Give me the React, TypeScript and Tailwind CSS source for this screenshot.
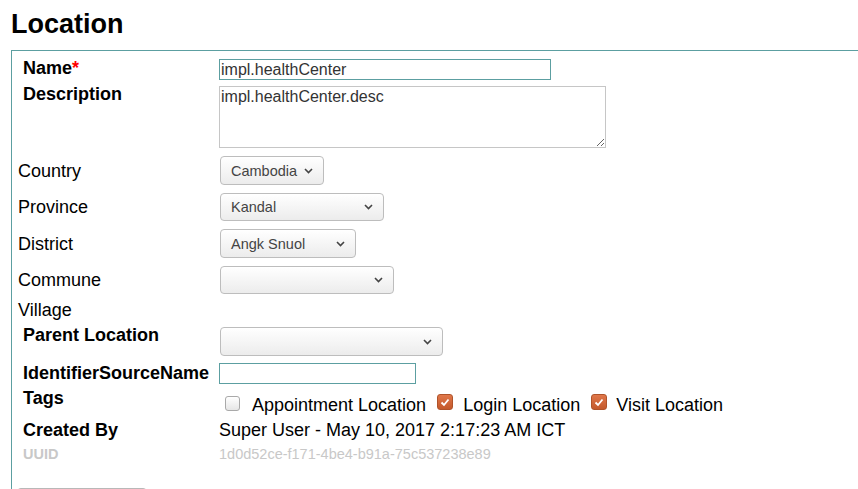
import React from 'react';

const boldLabel = 'w-[196px] shrink-0 text-[18px] font-bold leading-[20px]';
const plainLabel = 'w-[202px] shrink-0 text-[18px] leading-[20px]';

function Chevron() {
  return (
    <svg
      width="9"
      height="6"
      viewBox="0 0 9 6"
      className="pointer-events-none absolute right-[10px] top-1/2 -translate-y-1/2"
    >
      <path d="M1 1l3.5 3.5L8 1" fill="none" stroke="#444" strokeWidth="1.6" />
    </svg>
  );
}

function Select({ value, width, height }: { value: string; width: string; height: string }) {
  return (
    <div
      className={`relative ${width} ${height} rounded-[4px] border border-[#bdbdbd] bg-gradient-to-b from-white to-[#ececec] shadow-[inset_0_1px_0_#fff]`}
    >
      <span className="absolute left-[10px] top-1/2 -translate-y-1/2 text-[14.5px] leading-[17px] text-[#444]">
        {value}
      </span>
      <Chevron />
    </div>
  );
}

function Checkbox({ checked }: { checked: boolean }) {
  if (checked) {
    return (
      <span className="mt-[-1px] flex h-[16px] w-[16px] shrink-0 items-center justify-center rounded-[3px] border border-[#b0532a] bg-gradient-to-b from-[#e0774a] to-[#c4592b]">
        <svg width="10" height="9" viewBox="0 0 10 9">
          <path d="M1.5 4.5l2.5 2.5 4.5-5.5" fill="none" stroke="#fff" strokeWidth="1.8" />
        </svg>
      </span>
    );
  }
  return (
    <span className="mt-[1px] h-[15px] w-[15px] shrink-0 rounded-[3px] border border-[#a9a9a9] bg-gradient-to-b from-white to-[#e6e6e6]" />
  );
}

export default function App() {
  return (
    <div className="h-[489px] w-[858px] overflow-hidden bg-white font-['Liberation_Sans',Arial,sans-serif] text-black">
      <h1 className="pl-[11px] pt-[8px] text-[27px] font-bold leading-[32px]">Location</h1>

      <div className="ml-[11px] mt-[10px] w-[900px] border-l border-t border-[#5c9fa1] pt-[7px]">
        {/* Name */}
        <div className="flex h-[26px] pl-[11px]">
          <div className={boldLabel}>
            Name<span className="text-[#f00]">*</span>
          </div>
          <div className="mt-[1px] flex h-[21px] w-[332px] items-center border border-[#5c9fa1] pl-[1px] text-[16px] text-[#333]">
            impl.healthCenter
          </div>
        </div>

        {/* Description */}
        <div className="flex h-[64px] pl-[11px]">
          <div className={boldLabel}>Description</div>
          <textarea
            readOnly
            defaultValue="impl.healthCenter.desc"
            className="mt-[2px] h-[62px] w-[387px] resize border border-[#c6c6c6] px-[1px] py-0 text-[16px] leading-[19px] text-[#333] outline-none"
          />
        </div>

        {/* Address */}
        <div className="mt-[8px] pl-[6px]">
          <div className="flex h-[29px] items-center">
            <div className={plainLabel}>Country</div>
            <Select value="Cambodia" width="w-[104px]" height="h-[29px]" />
          </div>
          <div className="mt-[8px] flex h-[28px] items-center">
            <div className={plainLabel}>Province</div>
            <Select value="Kandal" width="w-[164px]" height="h-[28px]" />
          </div>
          <div className="mt-[8px] flex h-[29px] items-center">
            <div className={plainLabel}>District</div>
            <Select value="Angk Snuol" width="w-[136px]" height="h-[29px]" />
          </div>
          <div className="mt-[8px] flex h-[28px] items-center">
            <div className={plainLabel}>Commune</div>
            <Select value="" width="w-[174px]" height="h-[28px]" />
          </div>
          <div className="mt-[6px] flex h-[20px]">
            <div className={plainLabel}>Village</div>
          </div>
        </div>

        {/* Parent Location */}
        <div className="mt-[5px] flex pl-[11px]">
          <div className={boldLabel}>Parent Location</div>
          <div className="ml-[1px] mt-[2px]">
            <Select value="" width="w-[223px]" height="h-[29px]" />
          </div>
        </div>

        {/* IdentifierSourceName */}
        <div className="mt-[7px] flex pl-[11px]">
          <div className={boldLabel}>IdentifierSourceName</div>
          <div className="h-[21px] w-[197px] border border-[#5c9fa1]" />
        </div>

        {/* Tags */}
        <div className="mt-[4px] flex pl-[11px]">
          <div className={boldLabel}>Tags</div>
          <div className="mt-[7px] flex items-start text-[18px] leading-[20px]">
            <div className="ml-[6px] flex items-start">
              <Checkbox checked={false} />
              <span className="ml-[12px]">Appointment Location</span>
            </div>
            <div className="ml-[11px] flex items-start">
              <Checkbox checked />
              <span className="ml-[10px]">Login Location</span>
            </div>
            <div className="ml-[11px] flex items-start">
              <Checkbox checked />
              <span className="ml-[9px]">Visit Location</span>
            </div>
          </div>
        </div>

        {/* Created By */}
        <div className="mt-[5px] flex pl-[11px]">
          <div className={boldLabel}>Created By</div>
          <div className="text-[18px] leading-[20px]">Super User - May 10, 2017 2:17:23 AM ICT</div>
        </div>

        {/* UUID */}
        <div className="mt-[6px] flex pl-[11px] text-[#c8c8c8]">
          <div className="w-[196px] shrink-0 text-[14.5px] font-bold leading-[16px]">UUID</div>
          <div className="text-[14.5px] leading-[16px]">1d0d52ce-f171-4be4-b91a-75c537238e89</div>
        </div>

        <div className="ml-[4px] mt-[26px] h-[30px] w-[132px] rounded-[5px] border border-[#b8b8b8] bg-gradient-to-b from-white to-[#ececec]" />
      </div>
    </div>
  );
}
